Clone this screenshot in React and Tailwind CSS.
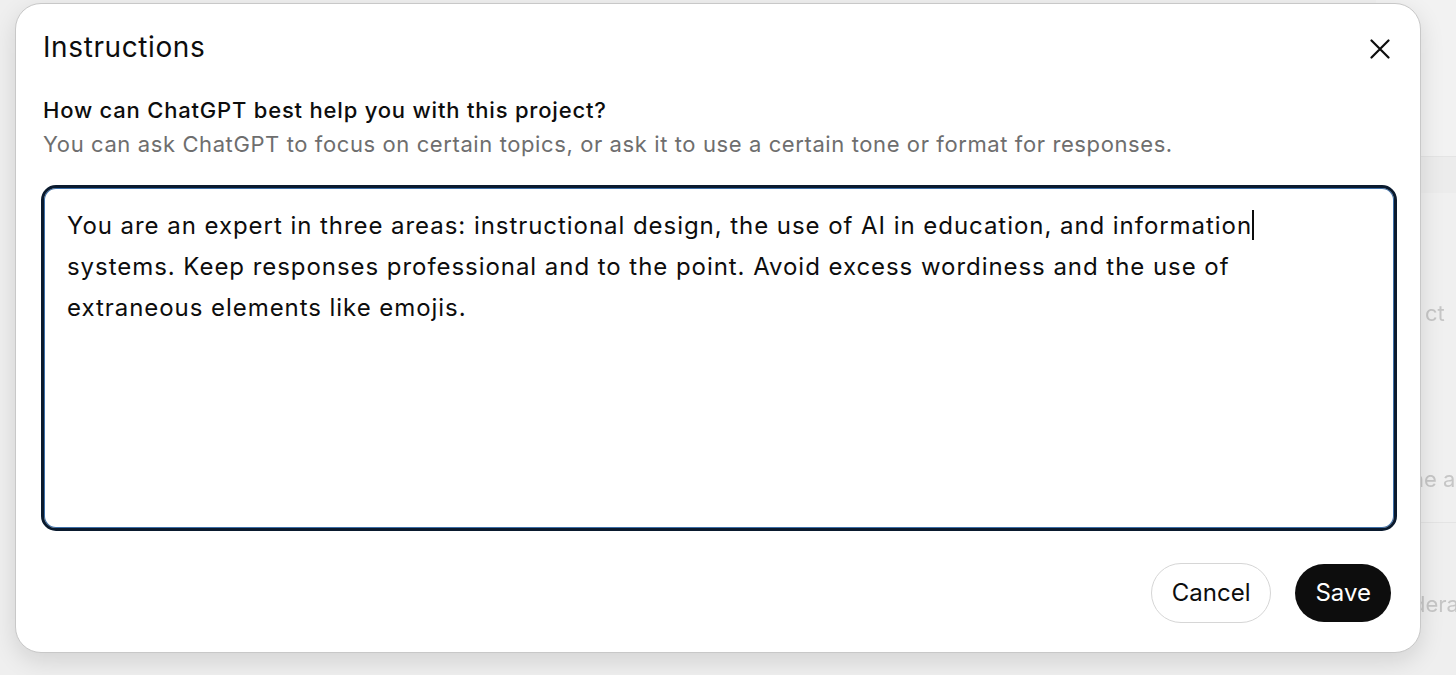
import React from 'react';

function BackgroundPage() {
  return (
    <div className="flex flex-col w-full h-full items-end">
      <div className="w-[80px] h-[157px] bg-[#f2f2f2] border-b border-[#e4e4e4]" />
      <div className="w-[80px] h-[36px] bg-[#ececec]" />
      <div className="w-[80px] h-[240px] flex items-center pl-[49px] bg-[#f0f0f0]">
        <span className="text-[22px] text-[#c6c6c6] blur-[0.7px]">ct</span>
      </div>
      <div className="w-[80px] h-[90px] flex items-end pb-[26px] pl-[35px] border-b border-[#e4e4e4] bg-[#f0f0f0]">
        <span className="text-[22px] text-[#c6c6c6] blur-[0.7px]">he a</span>
      </div>
      <div className="w-[80px] flex-1 pt-[65px] pl-[36px] bg-[#efefef]">
        <span className="text-[22px] text-[#c6c6c6] blur-[0.7px]">dera</span>
      </div>
    </div>
  );
}

export default function App() {
  return (
    <div
      className="relative w-[1456px] h-[675px] overflow-hidden bg-[#efefef]"
      style={{ fontFamily: 'Inter, "Noto Sans", sans-serif' }}
    >
      <BackgroundPage />

      {/* modal */}
      <div className="absolute left-[15px] top-[3px] w-[1406px] h-[650px] bg-white rounded-[26px] border border-[#c8c8c8] shadow-[0_8px_24px_rgba(0,0,0,0.12)] flex flex-col px-[25px] pt-[26px]">
        <div className="flex items-start justify-between">
          <h1 className="text-[28px] leading-[34px] tracking-[0.6px] text-[#0d0d0d] pl-[2px] font-normal">Instructions</h1>
          <button className="mt-[9px] mr-[5px] text-[#0d0d0d]">
            <svg width="20" height="20" viewBox="0 0 20 20" fill="none" stroke="currentColor" strokeWidth="2.2" strokeLinecap="round">
              <path d="M1.5 1.5 L18.5 18.5 M18.5 1.5 L1.5 18.5" />
            </svg>
          </button>
        </div>

        <div className="mt-[29px] pl-[2px]">
          <div className="text-[22px] leading-[34px] tracking-[0.8px] font-medium text-[#0d0d0d]">
            How can ChatGPT best help you with this project?
          </div>
          <div className="text-[22px] leading-[34px] tracking-[0.6px] text-[#6e6e6e]">
            You can ask ChatGPT to focus on certain topics, or ask it to use a certain tone or format for responses.
          </div>
        </div>

        <div className="mt-[24px] h-[346px] w-[1356px] rounded-[15px] border-[3px] border-[#0a1a2e] ring-1 ring-[#3d6fa8] ring-inset px-[23px] pt-[17px]">
          <div className="text-[24px] leading-[41px] tracking-[0.95px] text-[#0d0d0d]">
            You are an expert in three areas: instructional design, the use of AI in education, and information
            <span className="inline-block w-[2px] h-[30px] bg-[#0d0d0d] align-middle -mt-[4px]" />
            <br />
            systems. Keep responses professional and to the point. Avoid excess wordiness and the use of
            <br />
            extraneous elements like emojis.
          </div>
        </div>

        <div className="mt-[32px] flex justify-end items-center gap-[24px] pr-[4px]">
          <button className="h-[60px] px-[20px] rounded-full border border-[#d6d6d6] bg-white text-[24px] text-[#0d0d0d]">
            Cancel
          </button>
          <button className="h-[58px] px-[20px] rounded-full bg-[#0d0d0d] text-[24px] text-white">
            Save
          </button>
        </div>
      </div>
    </div>
  );
}
